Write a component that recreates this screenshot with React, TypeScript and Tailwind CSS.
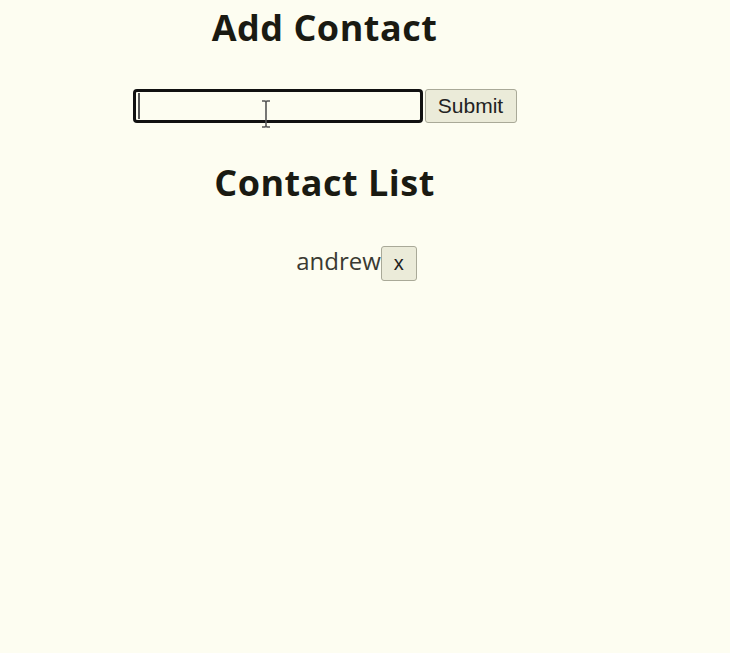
export default function App() {
  return (
    <div className="min-h-[653px] w-[730px] bg-[#fdfdf1] text-[#1a1a12]">
      <div className="w-[649px] pt-[6px] text-center">
        <h1 className="text-[36px] font-bold leading-[44px] tracking-[0.5px] [font-family:'Open_Sans',sans-serif]">
          Add Contact
        </h1>
        <form
          className="mt-[39px] flex items-center justify-center"
          onSubmit={(e) => e.preventDefault()}
        >
          <div className="relative">
            <input
              type="text"
              className="block h-[34px] w-[290px] rounded-[4px] border-[3px] border-[#111] bg-[#fdfdf1] px-1 outline-none"
            />
            {/* text caret */}
            <span className="absolute left-[5px] top-[4px] h-[26px] w-[2px] bg-[#555]" />
            {/* mouse I-beam */}
            <svg
              className="absolute left-[128px] top-[11px]"
              width="10"
              height="28"
              viewBox="0 0 10 28"
            >
              <path
                d="M1 1h3l1 1 1-1h3M5 2v24M1 27h3l1-1 1 1h3"
                fill="none"
                stroke="#555"
                strokeWidth="1.6"
              />
            </svg>
          </div>
          <button
            type="submit"
            className="ml-[2px] h-[34px] w-[92px] rounded-[3px] border border-[#a9a998] bg-[#ebebd9] text-[21px] text-[#222] [font-family:'Liberation_Sans',Arial,sans-serif]"
          >
            Submit
          </button>
        </form>
        <h2 className="mt-[38px] text-[36px] font-bold leading-[44px] tracking-[0.5px] [font-family:'Open_Sans',sans-serif]">
          Contact List
        </h2>
        <ul className="mt-[38px] pl-[64px]">
          <li className="flex items-center justify-center">
            <span className="mb-[4px] text-[24px] text-[#3a3a32] [font-family:'Open_Sans',sans-serif]">
              andrew
            </span>
            <button className="h-[35px] w-[36px] rounded-[3px] border border-[#a9a998] bg-[#ebebd9] text-[20px] text-[#222] [font-family:'Liberation_Sans',Arial,sans-serif]">
              x
            </button>
          </li>
        </ul>
      </div>
    </div>
  );
}
